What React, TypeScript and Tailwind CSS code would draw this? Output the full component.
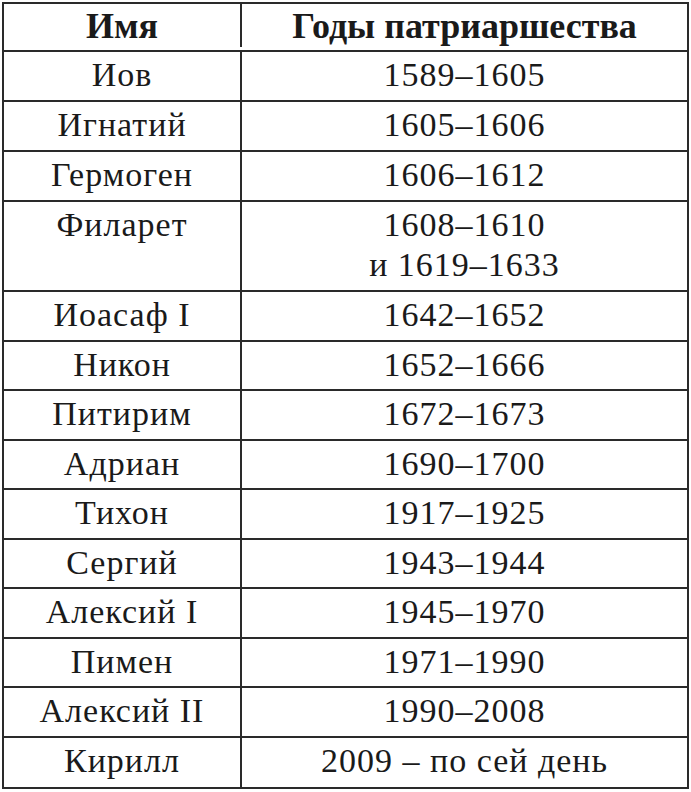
const rows: { name: string; years: string[] }[] = [
  { name: "Иов", years: ["1589–1605"] },
  { name: "Игнатий", years: ["1605–1606"] },
  { name: "Гермоген", years: ["1606–1612"] },
  { name: "Филарет", years: ["1608–1610", "и 1619–1633"] },
  { name: "Иоасаф I", years: ["1642–1652"] },
  { name: "Никон", years: ["1652–1666"] },
  { name: "Питирим", years: ["1672–1673"] },
  { name: "Адриан", years: ["1690–1700"] },
  { name: "Тихон", years: ["1917–1925"] },
  { name: "Сергий", years: ["1943–1944"] },
  { name: "Алексий I", years: ["1945–1970"] },
  { name: "Пимен", years: ["1971–1990"] },
  { name: "Алексий II", years: ["1990–2008"] },
  { name: "Кирилл", years: ["2009 – по сей день"] },
];

export default function App() {
  return (
    <div
      className="w-[691px] h-[792px] bg-white pt-[2px] pl-[2px] text-[#1a1a1a]"
      style={{ fontFamily: '"Liberation Serif", "Times New Roman", serif' }}
    >
      <div className="w-[687px] border-2 border-[#2a2a2a]">
        {/* header */}
        <div className="flex h-[48px] border-b-2 border-[#2a2a2a] text-[36px] font-bold leading-none pb-[3px]">
          <div className="w-[238px] border-r-2 border-[#2a2a2a] flex items-center justify-center">Имя</div>
          <div className="flex-1 flex items-center justify-center">Годы патриаршества</div>
        </div>
        {rows.map((r, i) => (
          <div
            key={r.name}
            className={`flex text-[34px] leading-[40px] tracking-[1px] ${
              i < rows.length - 1 ? "border-b-2 border-[#2a2a2a]" : ""
            } ${r.years.length > 1 ? "h-[90px]" : i < 3 ? "h-[50px]" : "h-[49.5px]"}`}
          >
            <div className="w-[238px] border-r-2 border-[#2a2a2a] text-center pt-[3px]">{r.name}</div>
            <div className="flex-1 text-center pt-[3px]">
              {r.years.map((y) => (
                <div key={y}>{y}</div>
              ))}
            </div>
          </div>
        ))}
      </div>
    </div>
  );
}
